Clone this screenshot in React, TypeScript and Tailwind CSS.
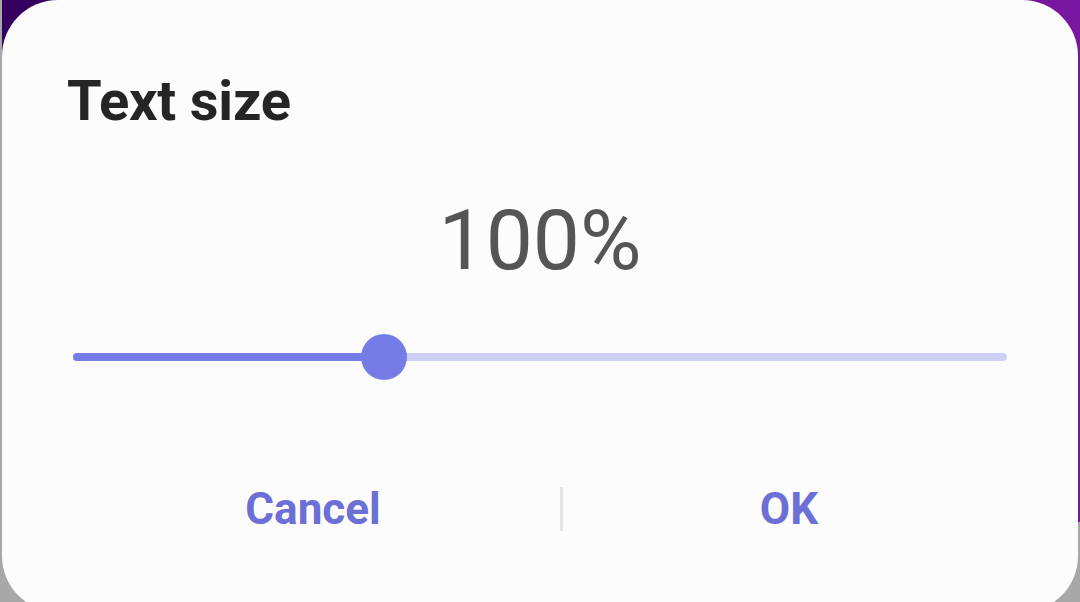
import React from "react";

export default function App() {
  const pct = 0.333;
  return (
    <div className="relative w-[1080px] h-[602px] overflow-hidden bg-[#a8a8a8]" style={{ fontFamily: "Roboto, 'Liberation Sans', sans-serif" }}>
      <div className="absolute left-[2px] top-0 w-[1078px] h-[522px] bg-gradient-to-r from-[#33005e] to-[#7a17a0]" />
      <div className="absolute left-[2px] top-0 w-[1076px] h-[612px] bg-[#fcfcfc] rounded-[56px] flex flex-col">
        <div className="pl-[65px] pt-[69px] text-[56px] leading-[64px] font-bold text-[#252525] tracking-[-0.2px]">Text size</div>
        <div className="mt-[60px] text-center text-[84px] leading-[96px] text-[#555555]">100%</div>
        <div className="mt-[45px] mx-[71px] relative h-[46px] flex items-center">
          <div className="w-full h-[8px] rounded-full bg-[#cdd0f4]" />
          <div className="absolute left-0 top-[19px] h-[8px] rounded-full bg-[#757ce6]" style={{ width: `${pct * 100}%` }} />
          <div className="absolute top-0 w-[46px] h-[46px] rounded-full bg-[#757ce6]" style={{ left: `calc(${pct * 100}% - 23px)` }} />
        </div>
        <div className="mt-[103px] pl-[64px] flex items-center">
          <div className="w-[494px] text-center text-[44px] leading-[52px] font-bold text-[#6b6fd6]">Cancel</div>
          <div className="w-[3px] h-[44px] bg-[#e4e4e4]" />
          <div className="w-[452px] text-center text-[44px] leading-[52px] font-bold text-[#6b6fd6]">OK</div>
        </div>
      </div>
    </div>
  );
}
